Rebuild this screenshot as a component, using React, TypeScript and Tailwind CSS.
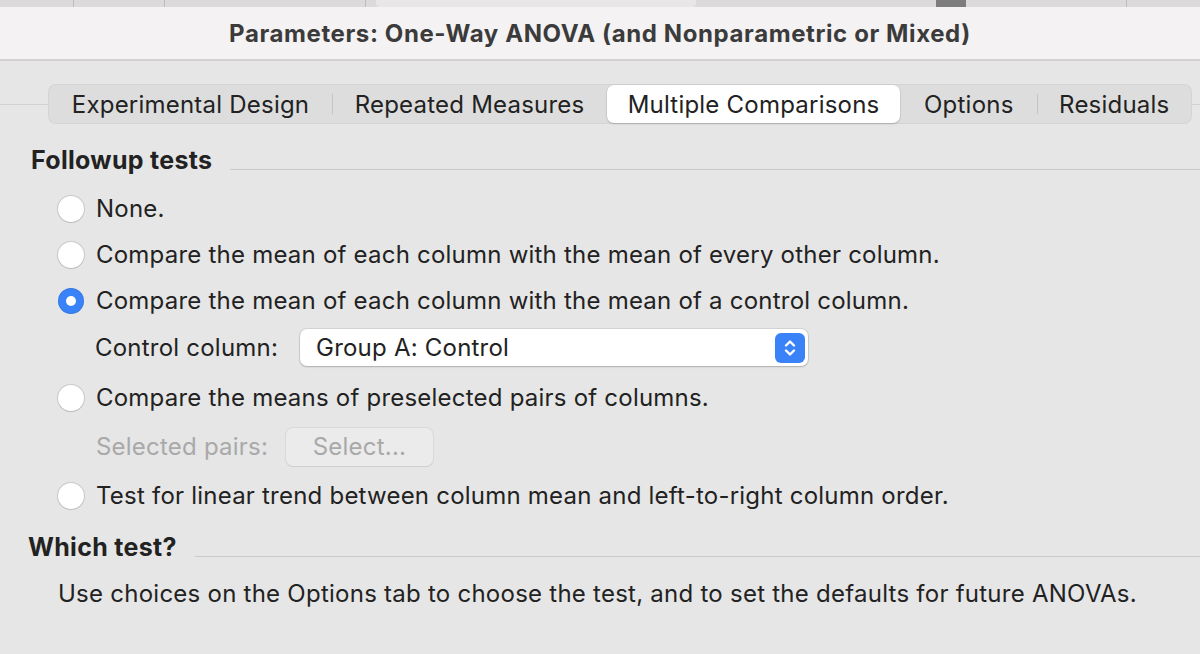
import React, { useState } from 'react';

const font = { fontFamily: 'Inter, "Noto Sans", sans-serif' };

const Radio = ({ checked }: { checked: boolean }) =>
  checked ? (
    <span className="flex h-[26px] w-[26px] shrink-0 items-center justify-center rounded-full bg-[#3a82f7] shadow-[inset_0_0_0_1px_rgba(0,0,0,0.08)]">
      <span className="h-[10px] w-[10px] rounded-full bg-white" />
    </span>
  ) : (
    <span className="h-[26px] w-[26px] shrink-0 rounded-full bg-white shadow-[0_0_0_1px_rgba(0,0,0,0.12),0_1px_1px_rgba(0,0,0,0.08)]" />
  );

const SectionHeading = ({ label, className }: { label: string; className: string }) => (
  <div className={`flex items-center ${className}`}>
    <span className="text-[25px] font-bold tracking-[0.3px] text-[#222]">{label}</span>
    <div className="ml-[18px] mt-[18px] h-px flex-1 bg-[#c9c9c9]" />
  </div>
);

const tabs = ['Experimental Design', 'Repeated Measures', 'Multiple Comparisons', 'Options', 'Residuals'];

export default function App() {
  const [test, setTest] = useState(2);
  const [tab, setTab] = useState(2);

  const options = [
    'None.',
    'Compare the mean of each column with the mean of every other column.',
    'Compare the mean of each column with the mean of a control column.',
    'Compare the means of preselected pairs of columns.',
    'Test for linear trend between column mean and left-to-right column order.',
  ];

  return (
    <div className="h-[654px] w-[1200px] overflow-hidden bg-[#e6e6e6] tracking-[0.22px]" style={font}>
      {/* toolbar remnants */}
      <div className="flex h-[7px] items-stretch bg-[#dcdada]">
        <div className="w-[73px]" />
        <div className="w-px bg-[#bdbdbd]" />
        <div className="w-[90px]" />
        <div className="w-px bg-[#bdbdbd]" />
        <div className="w-[200px]" />
        <div className="w-px bg-[#bdbdbd]" />
        <div className="ml-[10px] w-[320px] rounded-b bg-[#e8e6e6]" />
        <div className="ml-[240px] w-[30px] bg-[#7d7d7d]" />
        <div className="w-[160px]" />
        <div className="w-px bg-[#bdbdbd]" />
      </div>

      {/* title bar */}
      <div className="flex h-[54px] items-center justify-center border-b-2 border-[#d3d1d1] bg-[#f4f2f2] pt-[2px]">
        <span className="text-[24px] font-bold tracking-[0.6px] text-[#3b3b3b]">
          Parameters: One-Way ANOVA (and Nonparametric or Mixed)
        </span>
      </div>

      {/* tab bar */}
      <div className="relative mt-[23px] flex h-[40px] items-center">
        <div className="absolute inset-x-0 top-1/2 h-px bg-[#d2d2d2]" />
        <div className="relative ml-[48px] flex h-[40px] w-[1144px] items-center rounded-[8px] bg-[#dddddd] px-px shadow-[inset_0_0_0_1px_rgba(0,0,0,0.04)]">
          {tabs.map((t, i) => {
            const active = i === tab;
            const widths = ['w-[284px]', 'w-[274px]', 'w-[294px]', 'w-[136px]', 'w-[154px]'];
            return (
              <React.Fragment key={t}>
                {i > 0 && (
                  <div
                    className={`h-[20px] w-px ${
                      i === tab || i === tab + 1 ? 'bg-transparent' : 'bg-[#c4c4c4]'
                    }`}
                  />
                )}
                <button
                  onClick={() => setTab(i)}
                  className={`flex h-[38px] ${widths[i]} items-center justify-center rounded-[7px] pt-[1px] text-[24px] text-[#222] ${
                    active ? 'bg-white shadow-[0_1px_2px_rgba(0,0,0,0.18),0_0_0_0.5px_rgba(0,0,0,0.06)]' : ''
                  }`}
                >
                  {t}
                </button>
              </React.Fragment>
            );
          })}
        </div>
      </div>

      {/* Followup tests */}
      <SectionHeading label="Followup tests" className="ml-[31px] mt-[18px]" />

      <div className="ml-[58px] mt-[6px] flex flex-col text-[24px] text-[#222]">
        {options.map((label, i) => (
          <React.Fragment key={i}>
            <button
              onClick={() => setTest(i)}
              className={`flex h-[46px] items-center gap-[12px] text-left ${i === 3 ? 'mt-[3px]' : ''}`}
            >
              <Radio checked={test === i} />
              <span>{label}</span>
            </button>
            {i === 2 && (
              <div className="flex h-[48px] items-center">
                <span className="ml-[37px] w-[205px]">Control column:</span>
                <div className="flex h-[37px] w-[508px] items-center justify-between rounded-[7px] bg-white pl-[16px] pr-[3px] shadow-[0_0_0_1px_rgba(0,0,0,0.08),0_1px_2px_rgba(0,0,0,0.18)]">
                  <span>Group A: Control</span>
                  <span className="flex h-[30px] w-[30px] items-center justify-center rounded-[6px] bg-[#3a82f7]">
                    <svg width="14" height="22" viewBox="0 0 14 22" fill="none" stroke="white" strokeWidth="2.4" strokeLinecap="round" strokeLinejoin="round">
                      <path d="M3 8.5 L7 4.5 L11 8.5" />
                      <path d="M3 13.5 L7 17.5 L11 13.5" />
                    </svg>
                  </span>
                </div>
              </div>
            )}
            {i === 3 && (
              <div className="flex h-[52px] items-center text-[#a9a9a9]">
                <span className="ml-[38px] w-[190px]">Selected pairs:</span>
                <div className="flex h-[38px] w-[147px] items-center justify-center rounded-[7px] bg-[#ebebeb] shadow-[0_0_0_1px_rgba(0,0,0,0.05),0_1px_1px_rgba(0,0,0,0.06)]">
                  Select...
                </div>
              </div>
            )}
          </React.Fragment>
        ))}
      </div>

      {/* Which test? */}
      <SectionHeading label="Which test?" className="ml-[28px] mt-[10px]" />
      <p className="ml-[58px] mt-[10px] text-[24px] tracking-[0.25px] text-[#222]">
        Use choices on the Options tab to choose the test, and to set the defaults for future ANOVAs.
      </p>
    </div>
  );
}
